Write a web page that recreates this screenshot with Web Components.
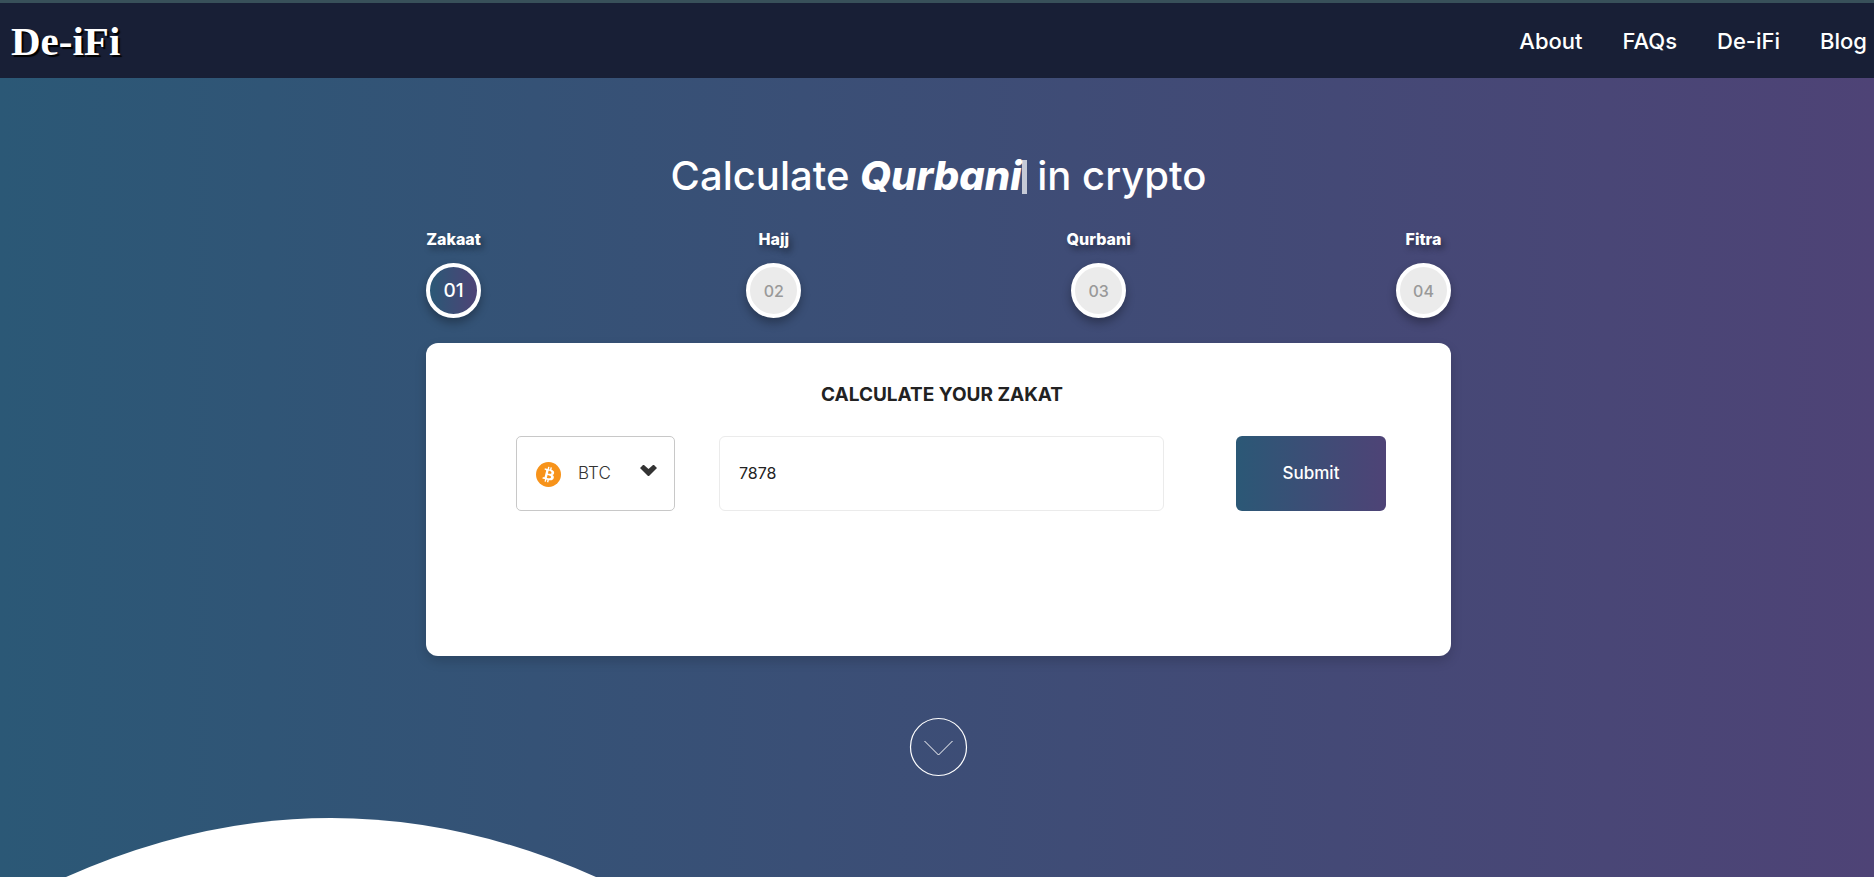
<!DOCTYPE html>
<html lang="en">
<head>
<meta charset="utf-8">
<meta name="viewport" content="width=device-width, initial-scale=1">
<title>De-iFi</title>
<style>
  html, body { margin: 0; }
  body {
    --brand: linear-gradient(to right, #2b5876, #4e4376);
    font-family: Inter, "Open Sans", sans-serif;
    color: #fff;
    min-height: 100vh;
    display: flex;
    flex-direction: column;
  }
</style>
</head>
<body>
<site-header>
  <nav-link href="#about">About</nav-link>
  <nav-link href="#faqs">FAQs</nav-link>
  <nav-link href="#de-ifi">De-iFi</nav-link>
  <nav-link href="#blog">Blog</nav-link>
</site-header>
<page-hero>
  <typed-heading word="Qurbani"></typed-heading>
  <step-list>
    <step-item number="01" active>Zakaat</step-item>
    <step-item number="02">Hajj</step-item>
    <step-item number="03">Qurbani</step-item>
    <step-item number="04">Fitra</step-item>
  </step-list>
  <zakat-card></zakat-card>
  <scroll-down></scroll-down>
</page-hero>

<script>
const define = (name, markup, setup) => {
  const template = document.createElement('template');
  template.innerHTML = markup;
  customElements.define(name, class extends HTMLElement {
    connectedCallback() {
      if (this.shadowRoot) return;
      const root = this.attachShadow({ mode: 'open' });
      root.append(template.content.cloneNode(true));
      if (setup) setup(this, root);
    }
  });
};

define('site-header', `
  <style>
    :host { display: block; background: #181f36; border-top: 3px solid #38505a; }
    header { display: flex; align-items: center; justify-content: space-between; height: 75px; padding: 0 7px 0 11px; }
    .logo { font: 700 41px/48px "Liberation Serif", serif; color: #fff; text-decoration: none; text-shadow: 2px 2px 1px #000; }
    nav { display: flex; gap: 40px; }
  </style>
  <header>
    <a class="logo" href="#home">De-iFi</a>
    <nav aria-label="Main"><slot></slot></nav>
  </header>`);

define('nav-link', `
  <style>
    :host { display: block; }
    a { color: #fff; font-size: 22px; line-height: 30px; font-weight: 500; text-decoration: none; }
  </style>
  <a><slot></slot></a>`, (host, root) => {
  root.querySelector('a').href = host.getAttribute('href');
});

define('page-hero', `
  <style>
    :host { display: flex; flex-direction: column; flex: 1; background: var(--brand); }
    .content { box-sizing: border-box; width: 100%; max-width: 1028px; margin: 0 auto; padding: 70px 0 40px 3px; display: flex; flex-direction: column; }
    .wave { display: block; width: 100%; height: 59px; margin-top: auto; }
  </style>
  <div class="content"><slot></slot></div>
  <svg class="wave" viewBox="0 0 1874 59" preserveAspectRatio="none" aria-hidden="true">
    <path fill="#fff" d="M66 59Q331 -59 596 59Z"/>
  </svg>`);

define('typed-heading', `
  <style>
    :host { display: block; text-align: center; }
    h1 { margin: 0; font-size: 40px; line-height: 56px; font-weight: 500; }
    em { font-weight: 800; }
    .caret { display: inline-block; width: 5px; height: 34px; background: #fff; opacity: .7; vertical-align: -4px; }
  </style>
  <h1>Calculate <em></em><span class="caret"></span> in crypto</h1>`, (host, root) => {
  root.querySelector('em').textContent = host.getAttribute('word');
});

define('step-list', `
  <style>
    :host { display: flex; justify-content: space-between; margin-top: 23px; }
  </style>
  <slot></slot>`);

define('step-item', `
  <style>
    :host { display: flex; flex-direction: column; align-items: center; gap: 12px; }
    .label { font-size: 16px; line-height: 24px; font-weight: 800; text-shadow: 3px 4px 6px rgba(0, 0, 0, .4); }
    button {
      box-sizing: border-box; width: 55px; height: 55px; padding: 0;
      border: 4px solid #fff; border-radius: 50%;
      background: #ebebeb; color: #999;
      font: 500 16px/24px Inter, sans-serif;
      box-shadow: 0 5px 10px rgba(0, 0, 0, .3);
    }
    :host([active]) button { background: var(--brand) padding-box; color: #fff; font-size: 19px; }
  </style>
  <label class="label" for="step"><slot></slot></label>
  <button id="step" type="button"></button>`, (host, root) => {
  root.querySelector('button').textContent = host.getAttribute('number');
});

define('zakat-card', `
  <style>
    :host { display: block; margin-top: 25px; background: #fff; color: #222; border-radius: 12px; box-shadow: 0 5px 12px rgba(0, 0, 0, .16); }
    form { box-sizing: border-box; min-height: 313px; padding: 37px 65px 36px 90px; }
    h2 { margin: 0 0 26px; padding-right: 18px; text-align: center; font-size: 19px; line-height: 30px; font-weight: 700; }
    .row { display: flex; }
    coin-select { margin-right: 44px; }
    input {
      box-sizing: border-box; flex: 1; min-width: 0; height: 75px; margin-right: 72px; padding: 0 19px 2px;
      border: 1px solid #ebebeb; border-radius: 6px; background: #fff; color: #222;
      font: 400 16px/24px Inter, sans-serif;
    }
    button {
      width: 150px; height: 75px; padding: 0 0 2px; border: 0; border-radius: 6px; background: var(--brand); color: #fff;
      font: 500 17px/24px Inter, sans-serif;
    }
  </style>
  <form>
    <h2>CALCULATE YOUR ZAKAT</h2>
    <div class="row">
      <coin-select></coin-select>
      <input type="text" inputmode="decimal" value="7878" aria-label="Amount">
      <button type="button">Submit</button>
    </div>
  </form>`);

define('coin-select', `
  <style>
    :host { display: grid; width: 159px; height: 75px; align-items: center; }
    select, svg { grid-area: 1 / 1; }
    select {
      appearance: none; box-sizing: border-box; width: 100%; height: 100%; margin: 0; padding: 0 40px 2px 61px;
      border: 1px solid #c8c8c8; border-radius: 5px; background: #fff; color: #333;
      font: 300 17px/24px Inter, sans-serif;
    }
    svg { pointer-events: none; z-index: 1; }
    .coin { margin: 2px 0 0 20px; }
    .arrow { justify-self: end; margin: 0 18px 6px 0; }
  </style>
  <select aria-label="Currency"><option>BTC</option><option>ETH</option></select>
  <svg class="coin" width="25" height="25" viewBox="0 0 32 32" aria-hidden="true">
    <circle cx="16" cy="16" r="16" fill="#f7931a"/>
    <path fill="#fff" fill-rule="evenodd" d="M23.2 14.02c.31-2.1-1.29-3.23-3.48-3.98l.71-2.85-1.74-.43-.69 2.78c-.46-.12-.93-.22-1.39-.33l.7-2.79-1.74-.43-.71 2.85c-.38-.09-.75-.17-1.11-.26l-2.4-.6-.46 1.86s1.29.3 1.26.31c.71.18.83.65.81 1.02l-1.97 7.9c-.09.21-.31.53-.8.41.02.02-1.26-.32-1.26-.32l-.87 2 2.27.56 1.24.32-.72 2.89 1.74.43.71-2.85c.48.13.94.25 1.39.36l-.71 2.84 1.74.43.72-2.88c2.97.56 5.21.34 6.15-2.35.76-2.17-.04-3.41-1.6-4.23 1.14-.26 2-1.01 2.21-2.56Zm-3.99 5.6c-.54 2.16-4.18.99-5.36.7l.95-3.83c1.18.3 4.97.88 4.41 3.13Zm.54-5.63c-.49 1.97-3.52.97-4.5.72l.86-3.47c.99.25 4.15.71 3.64 2.75Z"/>
  </svg>
  <svg class="arrow" width="17" height="11" viewBox="0 0 17 11" aria-hidden="true">
    <path fill="#333" d="M0 3L3 0H4L8.500 4L13 0H14L17 3L9 11H8Z"/>
  </svg>`);

define('scroll-down', `
  <style>
    :host { display: block; align-self: center; margin-top: 61px; }
    a { display: block; }
    svg { display: block; }
  </style>
  <a href="#more" aria-label="Scroll down">
    <svg width="59" height="60" viewBox="0 0 59 60" fill="none" stroke="#fff">
      <ellipse cx="29.500" cy="30" rx="28" ry="28.500" stroke-width="1.200"/>
      <path d="M15.500 24L29.500 38L43.500 24"/>
    </svg>
  </a>`);
</script>
</body>
</html>
